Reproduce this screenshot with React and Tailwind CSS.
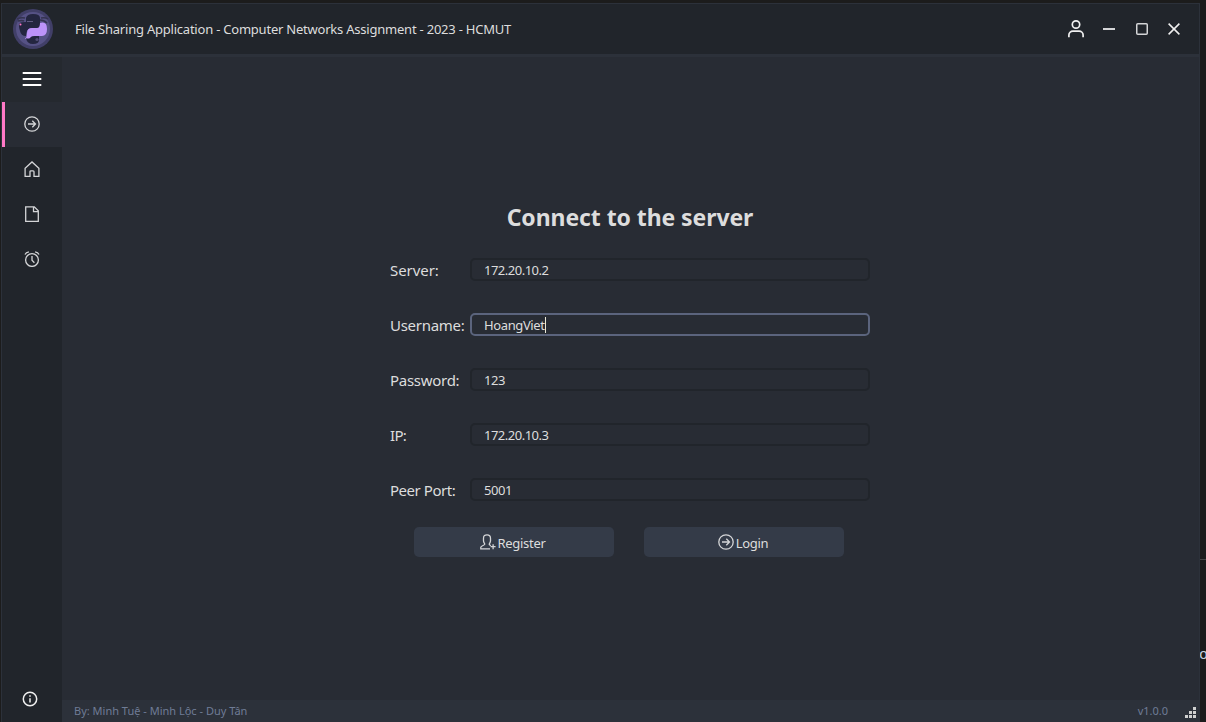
import React from "react";

const ArrowCircle = ({ className = "size-4" }) => (
  <svg viewBox="0 0 16 16" className={className} fill="none" stroke="#d4d5d7" strokeWidth="1.3">
    <circle cx="8" cy="8" r="7.2" />
    <path d="M4 8h7.4M8.3 4.8 11.5 8l-3.2 3.2" />
  </svg>
);

const HomeIcon = () => (
  <svg viewBox="0 0 16 16" className="size-4" fill="none" stroke="#d4d5d7" strokeWidth="1.3">
    <path d="M1.1 15.3V7.2L8 .9l6.9 6.3v8.1H10v-4.6a.9.9 0 0 0-.9-.9H6.9a.9.9 0 0 0-.9.9v4.6z" />
  </svg>
);

const FileIcon = () => (
  <svg viewBox="0 0 16 16" className="size-4" fill="none" stroke="#d4d5d7" strokeWidth="1.3">
    <path d="M1.7.8h8.6l4 4v10.5H1.7zM9.5.8v4.8h4.8" />
  </svg>
);

const AlarmIcon = () => (
  <svg viewBox="0 0 16 16" className="size-4" fill="none" stroke="#d4d5d7" strokeWidth="1.3">
    <circle cx="8" cy="9" r="6.4" />
    <path d="M8 5v4.3l2.4 2.4M1 3.5Q2 1.2 4.9.8M15 3.5Q14 1.2 11.1.8" />
  </svg>
);

const UserPlus = () => (
  <svg viewBox="0 0 16 16" className="size-4" fill="none" stroke="#d4d5d7" strokeWidth="1.3">
    <path d="M10 14.8H.8v-1.6c0-1.2 3.9-2 4-2.9.1-.7-1.3-1.7-1.3-3.6V4.2C3.5 1.7 5 .8 7 .8s3.5.9 3.5 3.4v2.5c0 1.9-1.3 2.9-1.3 3.6 0 .5.9.9 1.7 1.3M10.6 12.7h5M13.1 10.2v5" />
  </svg>
);

const Logo = () => (
  <svg viewBox="0 0 40 40" className="size-10">
    <circle cx="20" cy="20" r="20" fill="#413f68" />
    <circle cx="20" cy="20" r="17" fill="#565285" />
    <path d="M4 10q4-2 8-1M28 9q4-1 7 1M27 11q4 0 7 3M5 12q4-1 6 0" stroke="#34334f" strokeWidth="1.5" fill="none" />
    <path d="M13 9q1-4 7-4 7 0 7 4v10h-9q-5 1-5 8-5 0-6-5-2-6 0-8 1-1 6-1z" fill="#242640" />
    <path d="M27 14q7-2 7 6 0 7-5 7h-7q-4 0-5 3h-5q2-2 2-6 0-5 5-5h5q3 0 3-5z" fill="#bd93f9" />
    <path d="M13 29q2 1 4 0 1-2 5-2h4v4q0 4-6 4t-7-6z" fill="#242640" />
    <circle cx="7.5" cy="15.6" r="1" fill="#ff79c6" />
    <path d="M14 12.5h6" stroke="#706a91" strokeWidth=".8" />
    <circle cx="24" cy="30.5" r="1.6" fill="#514d76" />
  </svg>
);

const fields = [
  { label: "Server:", value: "172.20.10.2", lt: "tracking-[-0.05px]", vt: "tracking-[-0.5px]" },
  { label: "Username:", value: "HoangViet", focus: true, lt: "tracking-[-0.28px]", vt: "tracking-[-0.38px]" },
  { label: "Password:", value: "123", lt: "tracking-[-0.28px]", vt: "tracking-[-0.43px]" },
  { label: "IP:", value: "172.20.10.3", lt: "tracking-[-0.7px]", vt: "tracking-[-0.5px]" },
  { label: "Peer Port:", value: "5001", lt: "tracking-[-0.46px]", vt: "tracking-[-0.43px]" },
];

function TitleBar() {
  return (
    <header className="flex h-[53px] shrink-0 items-start border-b-[3px] border-[#2c313a] bg-[#21252b]">
      <div className="ml-[11px] mt-[5px]"><Logo /></div>
      <h1 className="ml-[22px] mt-[15px] whitespace-nowrap text-[13px] leading-5 tracking-[-0.22px] text-[#dddddd]">
        File Sharing Application - Computer Networks Assignment - 2023 - HCMUT
      </h1>
      <div className="ml-auto mr-[19px] mt-[15px] flex items-center">
        <svg viewBox="0 0 16 20" className="h-5 w-4" fill="none" stroke="#f0f0f0" strokeWidth="1.7">
          <circle cx="8" cy="5.5" r="3.7" />
          <path d="M.9 18.3v-2.2a4 4 0 0 1 4-4h6.2a4 4 0 0 1 4 4v2.2" />
        </svg>
        <svg viewBox="0 0 12 12" className="ml-[19px] size-3"><path d="M0 6h12" stroke="#d4d5d7" strokeWidth="2" /></svg>
        <svg viewBox="0 0 12 12" className="ml-[21px] size-3"><rect x=".75" y=".75" width="10.5" height="10.5" rx="1" fill="none" stroke="#d4d5d7" strokeWidth="1.5" /></svg>
        <svg viewBox="0 0 12 12" className="ml-5 size-3"><path d="m.6.6 10.8 10.8M11.4.6.6 11.4" stroke="#f0f0f0" strokeWidth="1.5" /></svg>
      </div>
    </header>
  );
}

function Sidebar() {
  return (
    <nav className="flex w-[60px] shrink-0 flex-col bg-[#21252b]">
      <button className="flex h-[45px] items-center justify-center bg-[#25292f] pb-0.5">
        <svg viewBox="0 0 20 16" className="h-4 w-5"><path d="M.7 2h18.6M.7 8h18.6M.7 14h18.6" stroke="#fff" strokeWidth="2" /></svg>
      </button>
      <button className="flex h-[45px] items-center justify-center border-l-[3px] border-[#ff79c6] bg-[#282c34] pb-0.5 pr-[3px]"><ArrowCircle /></button>
      <button className="flex h-[45px] items-center justify-center pb-0.5"><HomeIcon /></button>
      <button className="flex h-[45px] items-center justify-center pb-0.5"><FileIcon /></button>
      <button className="flex h-[45px] items-center justify-center pb-0.5"><AlarmIcon /></button>
      <button className="mt-auto flex h-[46px] items-center justify-center pr-1">
        <svg viewBox="0 0 16 16" className="size-4">
          <circle cx="8" cy="8" r="6.7" fill="none" stroke="#f0f0f0" strokeWidth="1.5" />
          <path d="M8 7.2v4.3M8 4.3v1.5" stroke="#f0f0f0" strokeWidth="1.5" />
        </svg>
      </button>
    </nav>
  );
}

function LoginForm() {
  return (
    <main className="flex grow flex-col items-center pr-px pt-[144px] text-[#dddddd]">
      <h2 className="h-[34px] whitespace-nowrap text-[23px] font-bold leading-8 tracking-[-0.08px]">Connect to the server</h2>
      <div className="mt-[7px] flex w-[480px] flex-col">
        {fields.map((f) => (
          <label key={f.label} className="flex h-[55px] items-center">
            <span className={"w-20 shrink-0 whitespace-nowrap text-[15px] leading-5 " + f.lt}>{f.label}</span>
            <span className={"flex h-[23px] w-[400px] items-center rounded-[5px] border-2 pl-3 text-[13px] leading-5 " + (f.focus ? "border-[#5b647d]" : "border-[#21252b]")}>
              <span className={f.vt}>{f.value}</span>
              {f.focus && <span className="h-4 w-px bg-[#e8e8d8]" />}
            </span>
          </label>
        ))}
      </div>
      <div className="mr-0.5 mt-[10px] flex gap-[30px] text-[13px] tracking-[-0.3px]">
        <button className="flex h-[30px] w-[200px] items-center justify-center gap-0.5 rounded-[5px] bg-[#343b48] pr-[3px]">
          <UserPlus /><span className="pt-1">Register</span>
        </button>
        <button className="flex h-[30px] w-[200px] items-center justify-center gap-[2px] rounded-[5px] bg-[#343b48] pr-0.5">
          <ArrowCircle /><span className="pt-1">Login</span>
        </button>
      </div>
    </main>
  );
}

export default function App() {
  return (
    <div className="flex h-[722px] w-[1206px] overflow-hidden bg-[#1c1c1c] pl-px pt-[3px] font-['Noto_Sans',sans-serif]">
      <div className="flex w-[1199px] shrink-0 flex-col border-x border-t border-[#2c313a] bg-[#282c34]">
        <TitleBar />
        <div className="flex min-h-0 grow">
          <Sidebar />
          <div className="flex grow flex-col">
            <LoginForm />
            <footer className="flex h-[22px] shrink-0 items-center bg-[#2c313a] pl-3 text-[11px] text-[#6f7c96]">
              <span>By: Minh Tuệ - Minh Lộc - Duy Tân</span>
              <span className="ml-auto">v1.0.0</span>
              <svg viewBox="0 0 11 11" className="ml-[17px] mr-[3px] mt-0.5 size-[11px]" fill="#cfd0d0">
                <path d="M8 0h3v3H8zM4 4h3v3H4zM8 4h3v3H8zM0 8h3v3H0zM4 8h3v3H4zM8 8h3v3H8z" />
              </svg>
            </footer>
          </div>
        </div>
      </div>
      <aside className="flex w-1.5 shrink-0 flex-col overflow-hidden pt-[556px]">
        <div className="h-px w-full shrink-0 bg-[#454545]" />
        <div className="-ml-px mt-[86px] font-['Liberation_Mono',monospace] text-[15px] leading-5 text-[#c4d0df]">o</div>
      </aside>
    </div>
  );
}
